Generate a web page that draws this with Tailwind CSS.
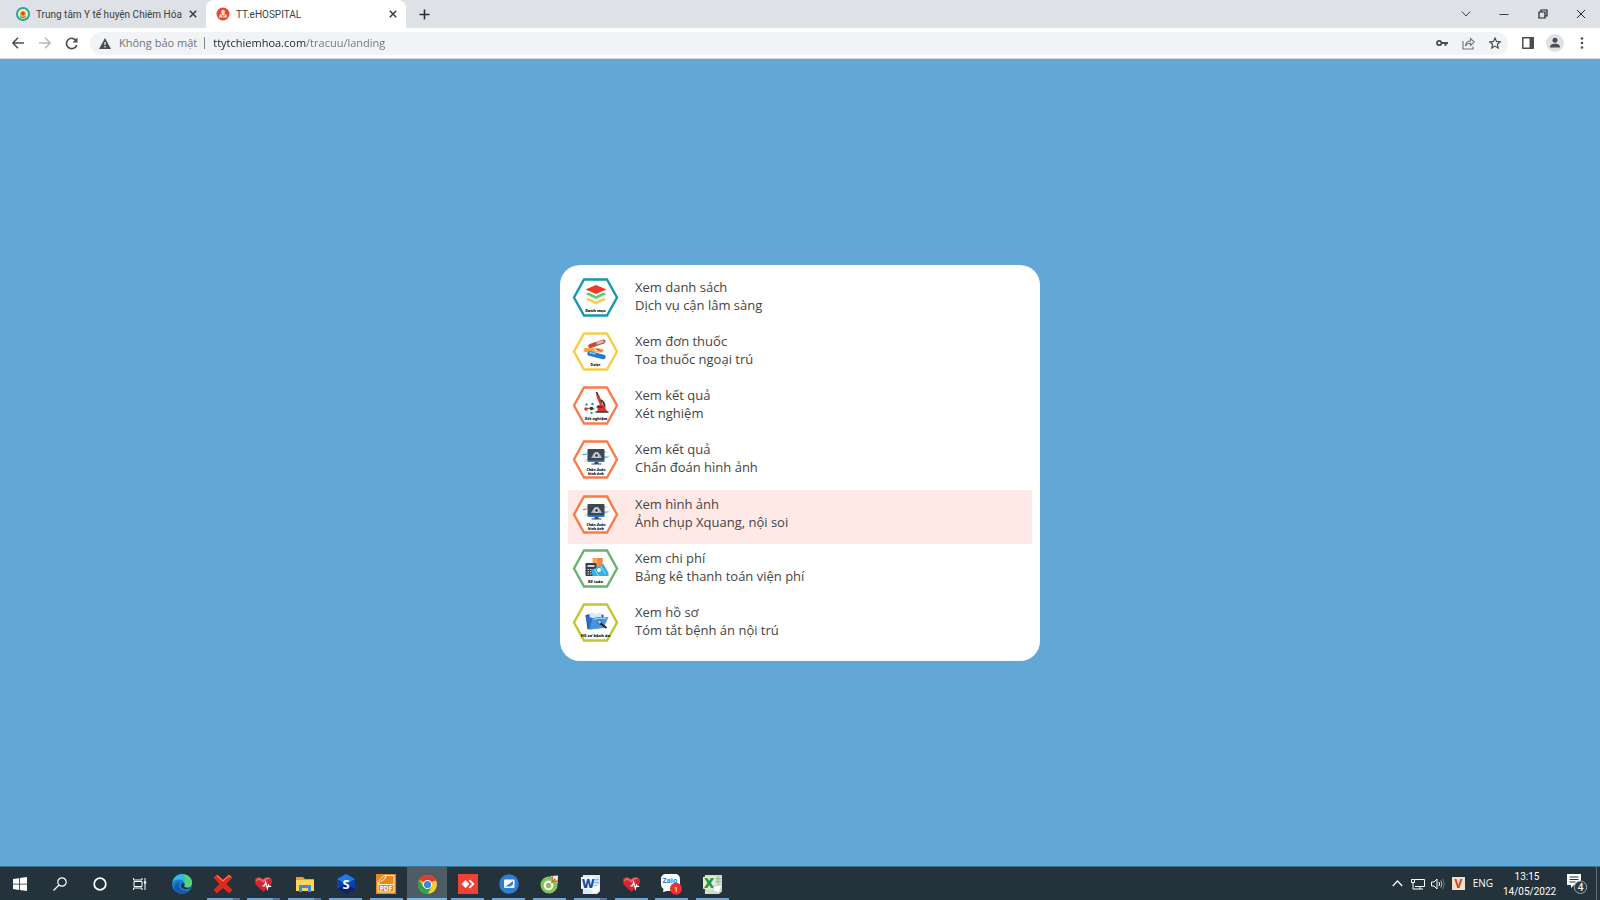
<!DOCTYPE html>
<html lang="vi">
<head>
  <meta charset="UTF-8">
  <meta name="viewport" content="width=device-width, initial-scale=1.0">
  <title>TT.eHOSPITAL</title>
  <script src="https://cdn.jsdelivr.net/npm/@tailwindcss/browser@4"></script>
</head>
<body class="min-h-screen flex flex-col bg-[#62a8d6] font-['Open_Sans','Noto_Sans',sans-serif] text-[#3c4043]">

  <!-- shared icons -->
  <svg class="hidden">
    <symbol id="heart" viewBox="0 0 20 20">
      <path d="M10 17.500C6 14 .8 10.500.8 6.500.8 1.500 7.500.8 10 5c2.500-4.200 9.200-3.500 9.200 1.500 0 4-5.200 7.500-9.200 11z" fill="#cf2733"/>
      <path d="M2 7c0-4 4-5.500 7-1.500 2-3.500 7-4 8.500-1-3-1-6 1-7.500 4-2-3-5-4-8-1.500z" fill="#e7686b"/>
      <path d="M9 11.500h2l1.300-4 1.800 7 1.200-4 .8 1.500h2" stroke="#fff" stroke-width="1.200" fill="none"/>
    </symbol>
    <symbol id="close" viewBox="0 0 10 10">
      <path d="M1.800 1.800l6.400 6.400M8.200 1.800l-6.400 6.400" stroke="#3c4043" stroke-width="1.600"/>
    </symbol>
    <symbol id="scan" viewBox="0 0 46 39">
      <path d="M11.500 1.500h23l10 18-10 18h-23l-10-18z" fill="#fff" stroke="#fa7a4a" stroke-width="2.400"/>
      <path d="M11 15l8-4M12 21l6-3M30 19l7-3M31 12h4" stroke="#d5d9de" stroke-width="1.500"/>
      <path d="M10 14.500h4M31 17h4" stroke="#4aa3ee" stroke-width="1.200"/>
      <rect x="15" y="9" width="17" height="12" rx="1" fill="#3d4653"/>
      <path d="M15 20.500h17v1.500H15z" fill="#2f80d8"/>
      <path d="M18.500 18l2-3.500L22.500 12h3l2 2.500 2 3.500z" fill="#aeb7c0"/>
      <circle cx="24" cy="15.500" r="2" fill="#3d4653" stroke="#e8ecef"/>
      <path d="M22 22h4v1.500h3v1H19v-1h3z" fill="#3d4653"/>
      <text x="23.500" y="30.500" font-size="3.500" font-weight="900" text-anchor="middle" fill="#111">Chẩn đoán</text>
      <text x="23.500" y="34.500" font-size="3.500" font-weight="900" text-anchor="middle" fill="#111">hình ảnh</text>
    </symbol>
  </svg>

  <!-- tab strip -->
  <header>
    <div class="flex h-7 items-stretch bg-[#dee1e6] font-[Roboto,sans-serif] text-[10px]">
      <div class="flex w-[206px] items-center pl-4 pr-2">
        <svg class="size-[14px] shrink-0" viewBox="0 0 14 14"><circle cx="7" cy="7" r="7" fill="#2aa699"/><circle cx="7" cy="7" r="5" fill="#f7f1cf"/><circle cx="7" cy="7" r="3.200" fill="#f2b63c"/><path d="M7 4.500v4M5 6.500h4" stroke="#d8402c" stroke-width="1.500"/><path d="M4 9.500c2 1.500 4 1.500 6 0" stroke="#2a7fc0" fill="none"/></svg>
        <span class="ml-[6px] flex-1 whitespace-nowrap">Trung tâm Y tế huyện Chiêm Hóa</span>
        <button aria-label="Đóng thẻ"><svg class="size-[10px]"><use href="#close"/></svg></button>
      </div>
      <div class="flex w-[200px] items-center rounded-t-lg bg-white pl-[10px] pr-2">
        <svg class="size-[14px] shrink-0" viewBox="0 0 14 14"><circle cx="7" cy="7" r="6.500" fill="#e8472c"/><circle cx="7" cy="4.800" r="2" fill="#fbd9d0"/><path d="M3 10.500c0-3.500 2-4 4-4s4 .5 4 4z" fill="#fbd9d0"/><path d="M5.500 7.500l1.500 2 2-2" stroke="#e8472c" fill="none"/></svg>
        <span class="ml-[6px] flex-1 whitespace-nowrap">TT.eHOSPITAL</span>
        <button aria-label="Đóng thẻ"><svg class="size-[10px]"><use href="#close"/></svg></button>
      </div>
      <button class="flex w-9 items-center justify-center" aria-label="Thẻ mới"><svg class="size-[11px]" viewBox="0 0 11 11"><path d="M5.500.5v10M.5 5.500h10" stroke="#2b2d30" stroke-width="1.600"/></svg></button>
      <div class="ml-auto grid w-[153px] grid-cols-4 place-items-center">
        <button aria-label="Tìm thẻ"><svg class="size-[10px]" viewBox="0 0 10 10" fill="none" stroke="#3c4043"><path d="M.8 2.500L5 7l4.200-4.500"/></svg></button>
        <button aria-label="Thu nhỏ"><svg class="size-[10px]" viewBox="0 0 10 10" stroke="#3c4043"><path d="M.5 5.500h9"/></svg></button>
        <button aria-label="Khôi phục"><svg class="size-[10px]" viewBox="0 0 10 10" fill="none" stroke="#222" stroke-width="1.200"><path d="M1 3h6v6H1zM3 3V1h6v6H7"/></svg></button>
        <button aria-label="Đóng"><svg class="size-[10px]" viewBox="0 0 10 10" stroke="#222"><path d="M1 1l8 8M9 1L1 9"/></svg></button>
      </div>
    </div>

    <!-- toolbar -->
    <div class="flex h-[31px] items-center border-b border-[#d5d8dc] bg-white px-3">
      <button aria-label="Quay lại"><svg class="size-3" viewBox="0 0 12 12" fill="none" stroke="#4a4d51" stroke-width="1.500"><path d="M12 6H1M6 .8L.9 6 6 11.200"/></svg></button>
      <button class="ml-[15px]" aria-label="Tiến"><svg class="size-3" viewBox="0 0 12 12" fill="none" stroke="#b5bbb8" stroke-width="1.500"><path d="M0 6h11M6 .8L11.100 6 6 11.200"/></svg></button>
      <button class="ml-[14px]" aria-label="Tải lại"><svg class="size-[13px]" viewBox="0 0 13 13" fill="none" stroke="#4a4d51" stroke-width="1.700"><path d="M11 3.500A5.200 5.200 0 1 0 11.700 8"/><path d="M12.500.5v5h-5z" fill="#4a4d51" stroke="none"/></svg></button>
      <div class="ml-3 flex h-[23px] flex-1 items-center rounded-full bg-[#f1f3f4] pl-[9px] pr-[7px]">
        <svg class="h-[11px] w-3" viewBox="0 0 12 11"><path d="M6 0l6 11H0z" fill="#4a4d51"/><path d="M6 4v3M6 8v1.500" stroke="#fff" stroke-width="1.200"/></svg>
        <label for="url" class="ml-2 border-r border-[#80868b] pr-[7px] text-[11px] leading-3 text-[#6f7378]">Không bảo mật</label>
        <input id="url" type="text" value="ttytchiemhoa.com/tracuu/landing" class="ml-2 w-80 bg-linear-to-r from-[#202124] from-[93px] to-[#6f7378] to-[93px] bg-clip-text text-[11px] text-transparent outline-none">
        <div class="ml-auto flex items-center gap-[14px]">
          <button aria-label="Mật khẩu"><svg class="size-3" viewBox="0 0 12 12" fill="none" stroke="#4a4d51"><circle cx="3.200" cy="6" r="2.200" stroke-width="1.800"/><path d="M5 6h7M9.500 6v2.800" stroke-width="2.200"/></svg></button>
          <button aria-label="Chia sẻ"><svg class="size-[13px]" viewBox="0 0 13 13" fill="none" stroke="#6f7378" stroke-width="1.100"><path d="M1 4v8h10V9.500"/><path d="M3.500 9c.3-3.500 2-5 5-5V1.500L12.300 5 8.500 8.500V6.300C6 6.300 4.500 7.200 3.500 9z"/></svg></button>
          <button aria-label="Dấu trang"><svg class="size-3" viewBox="0 0 12 12" fill="none" stroke="#4a4d51" stroke-width="1.200"><path d="M6 1l1.500 3.400 3.700.4-2.800 2.500.8 3.700L6 9.100 2.800 11l.8-3.700L.8 4.800l3.700-.4z"/></svg></button>
        </div>
      </div>
      <button class="ml-[14px]" aria-label="Bảng bên"><svg class="size-3" viewBox="0 0 12 12"><path d="M.8.800h10.400v10.400H.8z" fill="none" stroke="#4a4d51" stroke-width="1.500"/><path d="M7.500 1h4v10h-4z" fill="#4a4d51"/></svg></button>
      <button class="ml-3" aria-label="Hồ sơ"><svg class="size-[18px]" viewBox="0 0 18 18"><circle cx="9" cy="9" r="9" fill="#dee1e6"/><circle cx="9" cy="6.300" r="2.500" fill="#4a4d51"/><path d="M4 13.500c0-3 2-3.800 5-3.800s5 .8 5 3.800z" fill="#4a4d51"/></svg></button>
      <button class="ml-3" aria-label="Menu"><svg class="size-3" viewBox="0 0 12 12" fill="#4a4d51"><circle cx="6" cy="1.500" r="1.300"/><circle cx="6" cy="6" r="1.300"/><circle cx="6" cy="10.500" r="1.300"/></svg></button>
    </div>
  </header>

  <!-- landing menu -->
  <main class="flex flex-1 items-center justify-center">
    <nav class="flex min-h-[396px] w-full max-w-[480px] flex-col rounded-[20px] bg-white p-2 text-[13px] leading-[18px] text-[#444]">
      <a href="#" class="flex flex-1 gap-4 px-1 pt-[5px] hover:bg-[#ffe9e7]">
        <svg class="h-[39px] w-[47px]" viewBox="0 0 46 39"><path d="M11.500 1.500h23l10 18-10 18h-23l-10-18z" fill="#fff" stroke="#159aad" stroke-width="2.400"/><path d="M13 21.500l3-1.500 7.500 3.500L31 20l3 1.500-10.500 5z" fill="#f8cf4e"/><path d="M13 16l3-1.500 7.500 3.500L31 14.500l3 1.500-10.500 5z" fill="#4fd567"/><path d="M13 11.500L23.500 7 34 11.500 23.500 16z" fill="#ee3a2c"/><text x="23" y="33.500" font-size="4" font-weight="900" text-anchor="middle" fill="#111">Danh mục</text></svg>
        <span>Xem danh sách<br>Dịch vụ cận lâm sàng</span>
      </a>
      <a href="#" class="flex flex-1 gap-4 px-1 pt-[5px] hover:bg-[#ffe9e7]">
        <svg class="h-[39px] w-[47px]" viewBox="0 0 46 39"><path d="M11.500 1.500h23l10 18-10 18h-23l-10-18z" fill="#fff" stroke="#f8cd45" stroke-width="2.400"/><path d="M18 14L31 9.500" stroke="#8d6a66" stroke-width="4" stroke-linecap="round"/><path d="M18 13.500L30 9.500" stroke="#f4b49c" stroke-width="2.500" stroke-linecap="round"/><path d="M17.500 14l5-2" stroke="#d8432b" stroke-width="3.500" stroke-linecap="round"/><path d="M13 18l16 .5" stroke="#f3a43b" stroke-width="4" stroke-linecap="round"/><path d="M22 18h7" stroke="#fbe3c0" stroke-width="2.500"/><path d="M24 17l5 2" stroke="#e24a2d" stroke-width="1.500"/><path d="M17 21.500l14 3.500" stroke="#2476d2" stroke-width="4.500" stroke-linecap="round"/><path d="M17 20.500l6 1.500" stroke="#8cc4ff" stroke-width="1.500"/><text x="23" y="33.500" font-size="3.500" font-weight="900" text-anchor="middle" fill="#111">Dược</text></svg>
        <span>Xem đơn thuốc<br>Toa thuốc ngoại trú</span>
      </a>
      <a href="#" class="flex flex-1 gap-4 px-1 pt-[5px] hover:bg-[#ffe9e7]">
        <svg class="h-[39px] w-[47px]" viewBox="0 0 46 39"><path d="M11.500 1.500h23l10 18-10 18h-23l-10-18z" fill="#fff" stroke="#fa7a4a" stroke-width="2.400"/><path d="M24 6l3 8" stroke="#39363c" stroke-width="1.800"/><path d="M25 9l4 10" stroke="#e3342a" stroke-width="3"/><path d="M28 14c5 2 5 8 2 11" stroke="#39363c" stroke-width="1.800" fill="none"/><path d="M25 19h6l4 7H25z" fill="#e3342a"/><path d="M24 21h6M23 26h13" stroke="#39363c" stroke-width="1.500"/><path d="M13 23l5-1 4 1" stroke="#666" fill="none"/><circle cx="13.500" cy="23" r="1.800" fill="#e3342a"/><circle cx="19" cy="22.500" r="1.800" fill="#39363c"/><circle cx="14" cy="18.500" r="1.200" fill="#2ea58a"/><circle cx="20" cy="18" r="1.300" fill="#2ea58a"/><circle cx="19" cy="27" r="1.200" fill="#2ea58a"/><text x="23.500" y="33.500" font-size="3.800" font-weight="900" text-anchor="middle" fill="#111">Xét nghiệm</text></svg>
        <span>Xem kết quả<br>Xét nghiệm</span>
      </a>
      <a href="#" class="flex flex-1 gap-4 px-1 pt-[5px] hover:bg-[#ffe9e7]">
        <svg class="h-[39px] w-[47px]"><use href="#scan"/></svg>
        <span>Xem kết quả<br>Chẩn đoán hình ảnh</span>
      </a>
      <a href="#" class="flex flex-1 gap-4 bg-[#ffe9e7] px-1 pt-[5px]">
        <svg class="h-[39px] w-[47px]"><use href="#scan"/></svg>
        <span>Xem hình ảnh<br>Ảnh chụp Xquang, nội soi</span>
      </a>
      <a href="#" class="flex flex-1 gap-4 px-1 pt-[5px] hover:bg-[#ffe9e7]">
        <svg class="h-[39px] w-[47px]" viewBox="0 0 46 39"><path d="M11.500 1.500h23l10 18-10 18h-23l-10-18z" fill="#fff" stroke="#67b56d" stroke-width="2.400"/><path d="M20 9h10v12H20z" fill="#f4a461"/><path d="M25 9h5v12h-5z" fill="#ee8944"/><rect x="13" y="14" width="11" height="13" rx="1" fill="#3a3f47"/><path d="M15 16h7v2h-7z" fill="#cfd8dc"/><path d="M15 20.500h7M15 22.800h7M15 25h7" stroke="#dfe5e8" stroke-dasharray="1.500 1"/><path d="M19 21l12-6 5 9v3H20z" fill="#36aee8"/><path d="M22 20l4 7M28 17l5 8" stroke="#9be0ff"/><circle cx="26.500" cy="21" r="2" fill="#fff"/><text x="23" y="33.500" font-size="3.800" font-weight="900" text-anchor="middle" fill="#111">Kế toán</text></svg>
        <span>Xem chi phí<br>Bảng kê thanh toán viện phí</span>
      </a>
      <a href="#" class="flex flex-1 gap-4 px-1 pt-[5px] hover:bg-[#ffe9e7]">
        <svg class="h-[39px] w-[47px]" viewBox="0 0 46 39"><path d="M11.500 1.500h23l10 18-10 18h-23l-10-18z" fill="#fff" stroke="#c3c72f" stroke-width="2.400"/><path d="M13 12l7-1.500 2 2 9-1v9l-16 6z" fill="#1b5fb4"/><path d="M17 11l12-1v9l-12 4z" fill="#dbeafb"/><path d="M13 13l4 13.500 14-2L28 14l-8 1z" fill="#2f6fc0"/><path d="M20 15l16-1-5 11-14 1.500z" fill="#4a94dc"/><path d="M21 16l13-1" stroke="#a8d8ff"/><circle cx="27" cy="19" r="2" fill="#9fcbf2" stroke="#22364d" stroke-width=".6"/><path d="M28 20.500l6 4.500" stroke="#16202c" stroke-width="2"/><text x="23" y="33.500" font-size="4" font-weight="900" text-anchor="middle" fill="#111">Hồ sơ bệnh án</text></svg>
        <span>Xem hồ sơ<br>Tóm tắt bệnh án nội trú</span>
      </a>
    </nav>
  </main>

  <!-- taskbar -->
  <footer class="flex h-[34px] items-stretch border-t border-[#3d7395] bg-[#23323b] text-white">
    <div class="mr-[2px] grid w-40 grid-cols-4 place-items-center">
      <button aria-label="Start"><svg class="size-[14px]" viewBox="0 0 14 14" fill="#fff"><path d="M0 2l6-.8v5.500H0zM6.800 1.100L14 0v6.700H6.800zM0 7.400h6v5.500L0 12zM6.800 7.400H14V14l-7.200-1z"/></svg></button>
      <button aria-label="Tìm kiếm"><svg class="size-[14px]" viewBox="0 0 14 14" fill="none" stroke="#fff" stroke-width="1.200"><circle cx="9" cy="5" r="4.200"/><path d="M6 8L.5 13.500"/></svg></button>
      <button aria-label="Cortana"><svg class="size-[14px]" viewBox="0 0 14 14" fill="none" stroke="#fff" stroke-width="1.800"><circle cx="7" cy="7" r="5.800"/></svg></button>
      <button aria-label="Task view"><svg class="size-[14px]" viewBox="0 0 14 14" fill="none" stroke="#fff"><path d="M.5 1v2h8.500V1M.5 13v-2h8.500v2M1 4.500h8v5H1zM12 1v12"/><path d="M10.800 4.500h2.400v2h-2.400z" fill="#fff" stroke="none"/></svg></button>
    </div>
    <div class="grid w-[571px] grid-cols-[repeat(14,minmax(0,1fr))]">
      <button class="flex items-center justify-center" aria-label="Edge"><svg class="size-5" viewBox="0 0 20 20"><circle cx="10" cy="10" r="10" fill="#1780d4"/><path d="M.3 9C1 3.500 5 0 10 0c6 0 10 4 10 8.500 0 3-2 5-5 5-2.500 0-3.500-1-2.500-2.500C13 7 10 5.500 7 5.500 3.500 5.500 1 7 .3 9z" fill="#35b9dc"/><path d="M12 .5c5 1 8 4 8 8 0 3-2 5-5 5-2.500 0-3.500-1-2.500-2.500C14 6 12 3 12 .5z" fill="#54d478"/><path d="M7 10c0 5 4 8 10.500 6.500C14 21 6 21 2.500 15.500 2 11 4 8 8 8c-.7.500-1 1-1 2z" fill="#155bab"/><path d="M12.500 11c-1 1.500.5 3 3.500 2.800 1.500 0 2.700-.8 3.300-1.400-1.300 3-8.300 4.600-10.300-.4 0-2 1-3 2.500-3 1 0 1.500 1 1 2z" fill="#23323b"/></svg></button>
      <button class="flex flex-col items-center justify-between" aria-label="Ứng dụng"><svg class="my-auto size-5" viewBox="0 0 20 20"><path d="M4 .5L10 5.500 16 .5l3.500 3-6 6.500 6 6L16 19.500l-6-5.500-6 5.500L.5 16l6-6-6-6.500z" fill="#dd2a1b"/><path d="M4 1.500l6 5.500 6-5.500 2 2" stroke="#ff7558" stroke-width="1.200" fill="none"/></svg><span class="-mt-[3px] h-[2px] w-[33px] border-r-[7px] border-[#5d73a3] bg-[#6ba8d8]"></span></button>
      <button class="flex flex-col items-center justify-between" aria-label="eHospital"><svg class="my-auto size-[19px]"><use href="#heart"/></svg><span class="-mt-[3px] h-[2px] w-[33px] border-r-[7px] border-[#5d73a3] bg-[#6ba8d8]"></span></button>
      <button class="flex flex-col items-center justify-between" aria-label="File Explorer"><svg class="my-auto h-4 w-[18px]" viewBox="0 0 18 16"><path d="M0 1h7l2 2h9v12H0z" fill="#e8a02e"/><path d="M0 4h18v11H0z" fill="#fcd65c"/><path d="M3 16V9h12v7h-3v-4H6v4z" fill="#3690dc"/></svg><span class="-mt-[3px] h-[2px] w-[33px] border-r-[7px] border-[#5d73a3] bg-[#6ba8d8]"></span></button>
      <button class="flex flex-col items-center justify-between" aria-label="S"><svg class="my-auto size-5" viewBox="0 0 20 20"><path d="M10 0l9 5v10l-9 5-9-5V5z" fill="#0e3fae"/><path d="M10 0l9 5-9 5-9-5z" fill="#1d7be6"/><path d="M1 15l9-5 9 5-9 5z" fill="#0a2276"/><text x="10" y="14.500" font-size="13" font-weight="bold" text-anchor="middle" fill="#fff">S</text></svg><span class="-mt-[3px] h-[2px] w-[33px] bg-[#6ba8d8]"></span></button>
      <button class="flex flex-col items-center justify-between" aria-label="PDF"><svg class="my-auto size-5" viewBox="0 0 20 20"><path d="M0 0h20v20H0z" fill="#e18a20"/><path d="M2 10.500V7.500L8 1.500h10v9" fill="none" stroke="#ffe8c4"/><path d="M2.500 10C5 5 8 8 10 2" fill="none" stroke="#fff"/><path d="M2 10.500h16v7.500H2z" fill="#e18a20" stroke="#ffe8c4"/><text x="10" y="16.800" font-size="6.500" font-weight="bold" text-anchor="middle" fill="#fff">PDF</text></svg><span class="-mt-[3px] h-[2px] w-[33px] bg-[#6ba8d8]"></span></button>
      <button class="flex flex-col items-center justify-between bg-[#505c64]" aria-label="Chrome"><svg class="my-auto size-[19px]" viewBox="0 0 20 20"><circle cx="10" cy="10" r="10" fill="#f9cb2e"/><path d="M10 10L1.300 5A10 10 0 0 1 18.700 5z" fill="#e33b2e"/><path d="M1.300 5A10 10 0 0 0 10 20l4.300-7.500L10 10 5.700 12.500z" fill="#2ba24c"/><path d="M10 5h8.700l.5 1H10z" fill="#e33b2e"/><circle cx="10" cy="10" r="4.800" fill="#fff"/><circle cx="10" cy="10" r="3.800" fill="#3f83ee"/></svg><span class="-mt-[3px] h-[2px] w-full bg-[#76b9ed]"></span></button>
      <button class="flex flex-col items-center justify-between" aria-label="AnyDesk"><svg class="my-auto size-5" viewBox="0 0 20 20"><path d="M0 0h20v20H0z" fill="#ef4136"/><path d="M3.500 10L7.500 6l4 4-4 4zM10.500 6.500L12 5.500 16.500 10 12 14.500l-1.500-1L14 10z" fill="#fff"/></svg><span class="-mt-[3px] h-[2px] w-[33px] bg-[#6ba8d8]"></span></button>
      <button class="flex flex-col items-center justify-between" aria-label="UltraViewer"><svg class="my-auto size-5" viewBox="0 0 20 20"><circle cx="10" cy="10" r="9.800" fill="#2c80d2"/><rect x="5" y="5.500" width="10.500" height="8.500" rx="1" fill="#fff"/><path d="M6.500 12.500L14 7v3.500l-2.500 2z" fill="#2c80d2"/></svg><span class="-mt-[3px] h-[2px] w-[33px] bg-[#6ba8d8]"></span></button>
      <button class="flex flex-col items-center justify-between" aria-label="Cốc Cốc"><svg class="my-auto size-[19px]" viewBox="0 0 20 20"><path d="M19 1l-4 1-5-.5A9 9 0 1 0 18.500 10z" fill="#82c45e"/><path d="M11 1l8-.5L18.200 9z" fill="#e9f1dc"/><path d="M12.500 4l1-2.500M15.500 7l3-1" stroke="#e4552e" stroke-width="1.500"/><circle cx="9" cy="11" r="4" fill="none" stroke="#fff" stroke-width="2.200"/><path d="M12 8.500l4-4.500" stroke="#e4552e" stroke-width="1.500"/></svg><span class="-mt-[3px] h-[2px] w-[33px] bg-[#6ba8d8]"></span></button>
      <button class="flex flex-col items-center justify-between" aria-label="Word"><svg class="my-auto size-[19px]" viewBox="0 0 20 20"><path d="M2 0h18v17l-3 3H2z" fill="#dbe9f8"/><path d="M14 5h5M14 8h5M14 11h4" stroke="#80a8d8"/><path d="M0 2l14-1v15L0 14.500z" fill="#f4f9ff"/><text x="7.500" y="13.500" font-size="13" font-weight="900" text-anchor="middle" fill="#174f9e">W</text><path d="M12 13l8-3-2 8-6 2z" fill="#fff"/></svg><span class="-mt-[3px] h-[2px] w-[33px] border-r-[7px] border-[#5d73a3] bg-[#6ba8d8]"></span></button>
      <button class="flex flex-col items-center justify-between" aria-label="eHospital"><svg class="my-auto size-[19px]"><use href="#heart"/></svg><span class="-mt-[3px] h-[2px] w-[33px] bg-[#6ba8d8]"></span></button>
      <button class="flex flex-col items-center justify-between" aria-label="Zalo"><svg class="my-auto h-[22px] w-[21px]" viewBox="0 0 21 22"><path d="M5 1h9c3 0 5 2 5 5v7c0 3-2 5-5 5H6l-4 1 .5-3C1 15 0 13 0 11V6c0-3 2-5 5-5z" fill="#fff"/><text x="1.500" y="10" font-size="7" font-weight="bold" fill="#1f7ae0">Zalo</text><circle cx="15" cy="15.800" r="6" fill="#ee2f2b"/><text x="15" y="18.800" font-size="8" text-anchor="middle" fill="#fff">1</text></svg><span class="-mt-[3px] h-[2px] w-[33px] bg-[#6ba8d8]"></span></button>
      <button class="flex flex-col items-center justify-between" aria-label="Excel"><svg class="my-auto size-[19px]" viewBox="0 0 20 20"><path d="M2 0h18v17l-3 3H2z" fill="#cfe0ca"/><path d="M13 4h6M13 7h6M16 1v9" stroke="#8fbb8b"/><path d="M0 2l13-1v15L0 14.500z" fill="#dfeeda"/><text x="6.500" y="14" font-size="15" font-weight="900" text-anchor="middle" fill="#30963c">X</text><path d="M11 12l9-2-3 9-6-2z" fill="#fff" stroke="#9cab9c" stroke-width=".5"/></svg><span class="-mt-[3px] h-[2px] w-[33px] bg-[#6ba8d8]"></span></button>
    </div>

    <!-- tray -->
    <div class="ml-auto flex items-center text-[10px]">
      <button aria-label="Biểu tượng ẩn"><svg class="h-[7px] w-[11px]" viewBox="0 0 11 7" fill="none" stroke="#fff" stroke-width="1.200"><path d="M.8 6l4.700-5 4.700 5"/></svg></button>
      <button class="ml-2" aria-label="Mạng"><svg class="h-3 w-[14px]" viewBox="0 0 14 12" fill="none" stroke="#fff"><path d="M4 1.500h9.500v7H4M6 11h6M9 8.500V11M.5 1.500h3v3h-3zM2 4.500V11h4"/></svg></button>
      <button class="ml-[6px]" aria-label="Âm lượng"><svg class="h-3 w-[14px]" viewBox="0 0 14 12" fill="none" stroke="#fff"><path d="M.5 4h2.500l3-3v10L3 8H.5zM8 4q1.200 2 0 4"/><path d="M9.800 2.500q2.200 3.500 0 7" stroke="#c0c7cb"/><path d="M11.800 1q3 5 0 10" stroke="#68747c"/></svg></button>
      <button class="ml-[7px]" aria-label="Unikey"><svg class="size-[13px]" viewBox="0 0 13 13"><path d="M0 0h13v13H0z" fill="#f1dfcd"/><text x="6.500" y="11" font-size="12" font-weight="bold" text-anchor="middle" fill="#cf3b20">V</text></svg></button>
      <button class="ml-2">ENG</button>
      <time class="ml-[10px] w-12 whitespace-nowrap text-center font-[Roboto,sans-serif] leading-[15px]">13:15<br>14/05/2022</time>
      <button class="ml-4 mr-2" aria-label="Thông báo"><svg class="h-5 w-[21px]" viewBox="0 0 21 20"><path d="M0 0h14v11H7l-3 3v-3H0z" fill="#fff"/><path d="M2.500 3h9M2.500 5.500h9M2.500 8h6" stroke="#23323b"/><circle cx="13.500" cy="13.300" r="6.200" fill="#2b3941" stroke="#9aa3a8"/><text x="13.500" y="17" font-size="10" font-weight="600" text-anchor="middle" fill="#fff">4</text></svg></button>
      <span class="mr-[3px] h-full w-px bg-[#667078]"></span>
    </div>
  </footer>

</body>
</html>
